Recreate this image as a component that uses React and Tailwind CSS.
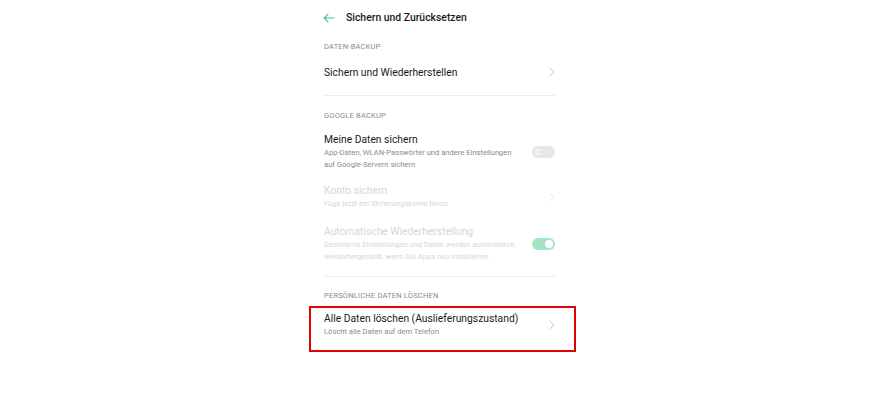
import React from 'react'

const Chevron = ({ faded }) => (
  <svg width="6" height="10" viewBox="0 0 6 10" fill="none" className={faded ? 'opacity-40' : ''}>
    <path d="M1 1l4 4-4 4" stroke="#c4c4c4" strokeWidth="1" strokeLinecap="round" strokeLinejoin="round" />
  </svg>
)

const Toggle = ({ on }) =>
  on ? (
    <div className="w-[23px] h-[12px] rounded-full bg-[#a6e3c4] flex items-center justify-end pr-[2px]">
      <div className="w-[8px] h-[8px] rounded-full bg-white" />
    </div>
  ) : (
    <div className="w-[23px] h-[12px] rounded-full bg-[#e6e6e6] flex items-center pl-[3px]">
      <div className="w-[6px] h-[6px] rounded-full border border-white" />
    </div>
  )

function Section({ children }) {
  return <div className="text-[7.5px] text-[#8a8a8a] tracking-[0.2px] uppercase leading-none">{children}</div>
}

export default function App() {
  return (
    <div className="w-[879px] h-[400px] bg-white flex justify-center" style={{ fontFamily: 'Roboto, "Noto Sans", sans-serif' }}>
      <div className="w-[231px] flex flex-col">
        {/* header */}
        <div className="flex items-center h-[20px] mt-[8px] -ml-[1px]">
          <svg width="12" height="10" viewBox="0 0 12 10" fill="none">
            <path d="M11 5H1.5M5 1.2L1.2 5 5 8.8" stroke="#37c98a" strokeWidth="1.1" strokeLinecap="round" strokeLinejoin="round" />
          </svg>
          <span className="ml-[11px] text-[10.4px] font-medium text-[#1a1a1a]">Sichern und Zurücksetzen</span>
        </div>

        <div className="mt-[15px]"><Section>Daten-Backup</Section></div>
        <div className="flex items-center justify-between mt-[14px]">
          <span className="text-[10.3px] text-[#1a1a1a]">Sichern und Wiederherstellen</span>
          <Chevron />
        </div>
        <div className="h-px bg-[#ececec] mt-[15px]" />

        <div className="mt-[16px]"><Section>Google Backup</Section></div>
        <div className="flex items-center justify-between mt-[14px]">
          <div>
            <div className="text-[10.3px] text-[#1a1a1a] leading-[14px]">Meine Daten sichern</div>
            <div className="text-[7.6px] text-[#8a8a8a] leading-[12px] w-[192px]">
              App-Daten, WLAN-Passwörter und andere Einstellungen auf Google-Servern sichern
            </div>
          </div>
          <Toggle />
        </div>

        <div className="flex items-center justify-between mt-[13px]">
          <div>
            <div className="text-[10.3px] text-[#d6d6d6] leading-[14px]">Konto sichern</div>
            <div className="text-[7.6px] text-[#d6d6d6] leading-[12px]">Füge jetzt ein Sicherungskonto hinzu</div>
          </div>
          <Chevron faded />
        </div>

        <div className="flex items-center justify-between mt-[15px]">
          <div>
            <div className="text-[10.3px] text-[#d6d6d6] leading-[14px]">Automatische Wiederherstellung</div>
            <div className="text-[7.6px] text-[#d6d6d6] leading-[12px] w-[194px]">
              Gesicherte Einstellungen und Daten werden automatisch wiederhergestellt, wenn Sie Apps neu installieren.
            </div>
          </div>
          <Toggle on />
        </div>
        <div className="h-px bg-[#ececec] mt-[13px]" />

        <div className="mt-[15px]"><Section>Persönliche Daten löschen</Section></div>
        <div className="relative flex items-center justify-between mt-[12px]">
          <div>
            <div className="text-[10.3px] text-[#1a1a1a] leading-[14px]">Alle Daten löschen (Auslieferungszustand)</div>
            <div className="text-[7.6px] text-[#8a8a8a] leading-[12px]">Löscht alle Daten auf dem Telefon</div>
          </div>
          <Chevron />
          <div className="absolute -left-[15px] -right-[21px] -top-[6px] -bottom-[14px] border-2 border-[#e00000]" />
        </div>
      </div>
    </div>
  )
}
